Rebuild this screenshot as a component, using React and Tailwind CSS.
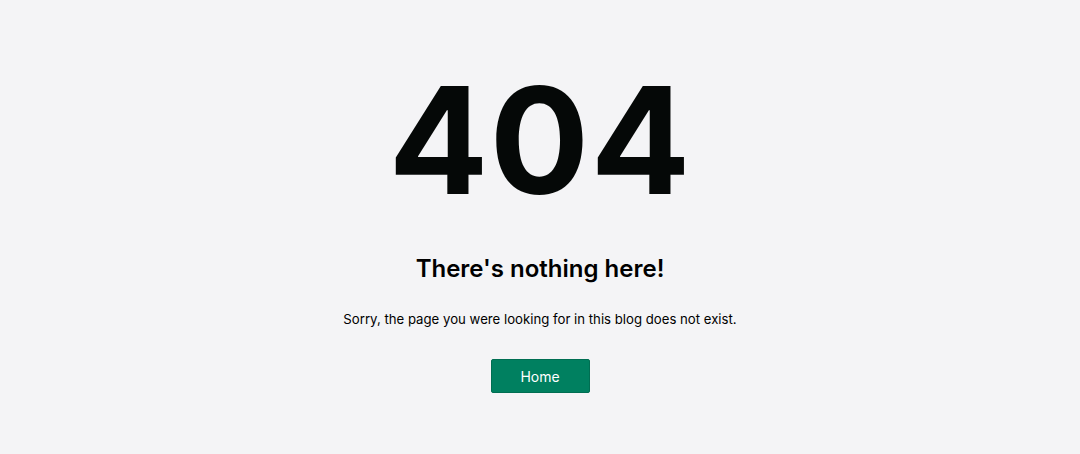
export default function App() {
    return (
        <div className="min-h-[454px] w-full bg-[#f4f4f6] flex flex-col items-center text-[#050807]" style={{ fontFamily: 'Inter, "Noto Sans", sans-serif' }}>
            <h1 className="mt-[57px] text-[148px] leading-[168px] font-bold tracking-[1px]">404</h1>
            <h2 className="mt-[28px] text-[24px] leading-[32px] font-semibold text-black">There's nothing here!</h2>
            <p className="mt-[24px] text-[13.2px] leading-[20px] text-black">Sorry, the page you were looking for in this blog does not exist.</p>
            <button className="mt-[30px] w-[99px] h-[34px] bg-[#008060] rounded-[2px] text-white text-[14px] border border-[#006e52]">
                Home
            </button>
        </div>
    );
}
